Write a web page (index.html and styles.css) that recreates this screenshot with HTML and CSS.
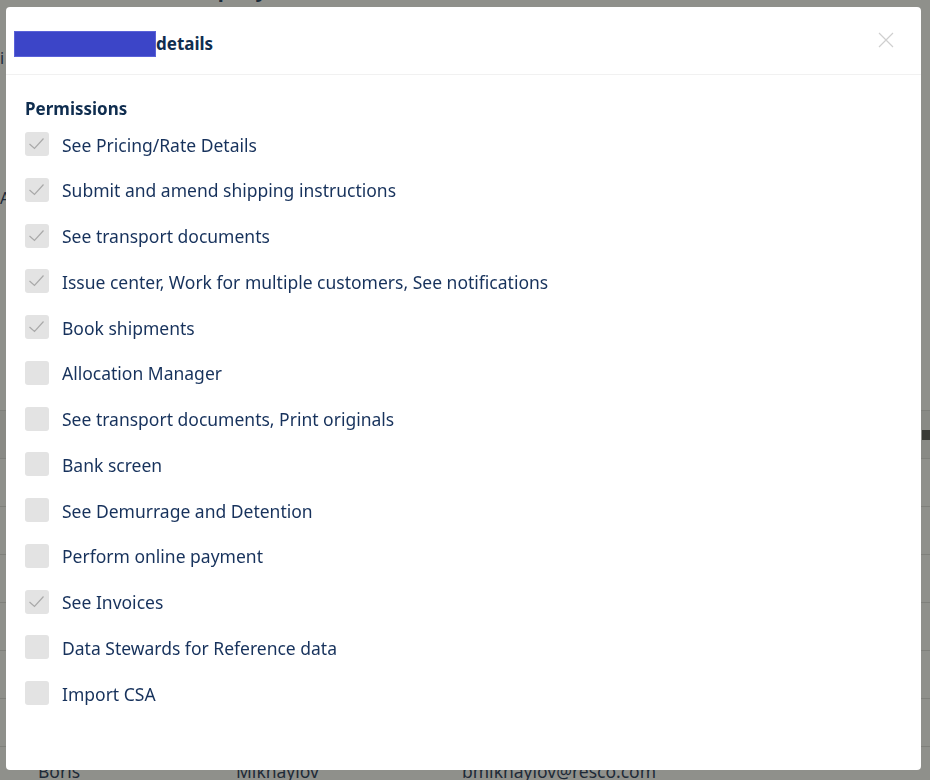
FILE: index.html
```html
<!DOCTYPE html>
<html lang="en">
<head>
<meta charset="utf-8">
<title>User details</title>
<link rel="stylesheet" href="styles.css">
</head>
<body>
  <div class="page">
    <div class="page-top">
      <h1 class="page-title">Users of the company account</h1>
      <div class="side-note">i</div>
      <div class="side-note side-note--low">A'</div>
    </div>
    <div class="users">
      <div class="user-row user-row--hover"><span>Anna</span><span>Petrova</span><span>apetrova@resco.com</span><span class="row-action"></span></div>
      <div class="user-row"><span>Ivan</span><span>Sokolov</span><span>isokolov@resco.com</span></div>
      <div class="user-row"><span>Olga</span><span>Ivanova</span><span>oivanova@resco.com</span></div>
      <div class="user-row"><span>Pavel</span><span>Orlov</span><span>porlov@resco.com</span></div>
      <div class="user-row"><span>Maria</span><span>Kuznetsova</span><span>mkuznetsova@resco.com</span></div>
      <div class="user-row"><span>Dmitry</span><span>Volkov</span><span>dvolkov@resco.com</span></div>
      <div class="user-row"><span>Elena</span><span>Smirnova</span><span>esmirnova@resco.com</span></div>
      <div class="user-row"><span>Boris</span><span>Mikhaylov</span><span>bmikhaylov@resco.com</span></div>
    </div>
  </div>

  <div class="overlay">
    <div class="modal" role="dialog" aria-label="User details">
      <header class="modal-header">
        <h2 class="modal-title"><span class="name-mask"></span>details</h2>
        <button class="close" type="button" aria-label="Close">
          <svg width="16" height="16" viewBox="0 0 16 16"><path d="M1 1L15 15M15 1L1 15" stroke="#cfcfcf" stroke-width="1.2" fill="none"/></svg>
        </button>
      </header>
      <section class="modal-body">
        <h3 class="section-title">Permissions</h3>
        <ul class="perm-list">
          <li class="perm checked"><span class="box"><svg viewBox="0 0 24 24"><polyline points="4.5,12 9.5,16.5 18.5,6.5"/></svg></span>See Pricing/Rate Details</li>
          <li class="perm checked"><span class="box"><svg viewBox="0 0 24 24"><polyline points="4.5,12 9.5,16.5 18.5,6.5"/></svg></span>Submit and amend shipping instructions</li>
          <li class="perm checked"><span class="box"><svg viewBox="0 0 24 24"><polyline points="4.5,12 9.5,16.5 18.5,6.5"/></svg></span>See transport documents</li>
          <li class="perm checked"><span class="box"><svg viewBox="0 0 24 24"><polyline points="4.5,12 9.5,16.5 18.5,6.5"/></svg></span>Issue center, Work for multiple customers, See notifications</li>
          <li class="perm checked"><span class="box"><svg viewBox="0 0 24 24"><polyline points="4.5,12 9.5,16.5 18.5,6.5"/></svg></span>Book shipments</li>
          <li class="perm"><span class="box"></span>Allocation Manager</li>
          <li class="perm"><span class="box"></span>See transport documents, Print originals</li>
          <li class="perm"><span class="box"></span>Bank screen</li>
          <li class="perm"><span class="box"></span>See Demurrage and Detention</li>
          <li class="perm"><span class="box"></span>Perform online payment</li>
          <li class="perm checked"><span class="box"><svg viewBox="0 0 24 24"><polyline points="4.5,12 9.5,16.5 18.5,6.5"/></svg></span>See Invoices</li>
          <li class="perm"><span class="box"></span>Data Stewards for Reference data</li>
          <li class="perm"><span class="box"></span>Import CSA</li>
        </ul>
      </section>
    </div>
  </div>
</body>
</html>
```

FILE: styles.css
```css
* { box-sizing: border-box; }

html, body {
  margin: 0;
  padding: 0;
  height: 100%;
  overflow: hidden;
}

body {
  background: #ffffff;
  font-family: "Noto Sans", "Open Sans", sans-serif;
  color: #17325c;
}

/* underlying page */
.page {
  width: 930px;
}

.page-top {
  height: 410px;
  border-top: 1px solid transparent;
}

.page-title {
  margin: -25px 0 0 50px;
  font-size: 20px;
  font-weight: 700;
  color: #16345c;
}

.side-note {
  margin: 44px 0 0 0;
  font-size: 16px;
}

.side-note--low {
  margin-top: 118px;
}

.users {
  border-top: 1px solid #dedede;
}

.user-row {
  height: 48px;
  display: grid;
  grid-template-columns: 198px 226px 1fr 20px;
  align-items: center;
  padding-left: 38px;
  border-bottom: 1px solid #dedede;
  font-size: 17.5px;
  color: #1d3358;
}

.user-row--hover {
  background: #f2f2f2;
}

.row-action {
  width: 8px;
  height: 10px;
  background: #555;
  justify-self: end;
}

/* modal */
.overlay {
  position: fixed;
  inset: 0;
  background: rgba(31, 33, 23, 0.5);
}

.modal {
  position: absolute;
  left: 6px;
  top: 7px;
  width: 915px;
  height: 763px;
  background: #ffffff;
  border-radius: 4px;
  display: flex;
  flex-direction: column;
}

.modal-header {
  height: 68px;
  flex: none;
  display: flex;
  align-items: center;
  justify-content: space-between;
  padding: 0 27px 0 8px;
  border-bottom: 1px solid #f1f1f1;
}

.modal-title {
  margin: 6px 0 0;
  display: flex;
  align-items: center;
  font-size: 17px;
  font-weight: 700;
  color: #0f2d4f;
}

.name-mask {
  display: inline-block;
  width: 142px;
  height: 26px;
  background: #3c45c8;
  border: 1px solid #5a62d8;
}

.close {
  border: 0;
  background: none;
  padding: 0;
  width: 16px;
  height: 16px;
  display: block;
  cursor: pointer;
  margin-top: -2px;
}

.close svg { display: block; }

.modal-body {
  padding: 24px 19px;
}

.section-title {
  margin: 0 0 13px;
  font-size: 17px;
  font-weight: 700;
  color: #0f2d4f;
  line-height: 20px;
}

.perm-list {
  list-style: none;
  margin: 0;
  padding: 0;
  display: flex;
  flex-direction: column;
  gap: 21.75px;
}

.perm {
  display: flex;
  align-items: center;
  gap: 13px;
  height: 24px;
  font-size: 17.5px;
  color: #17325c;
  padding-top: 1px;
}

.perm .box {
  margin-top: -1px;
}

.box {
  width: 24px;
  height: 24px;
  flex: none;
  border-radius: 3px;
  background: #e3e3e3;
}

.box svg {
  display: block;
  width: 24px;
  height: 24px;
  fill: none;
  stroke: #a9a9a9;
  stroke-width: 1.2;
}
```
